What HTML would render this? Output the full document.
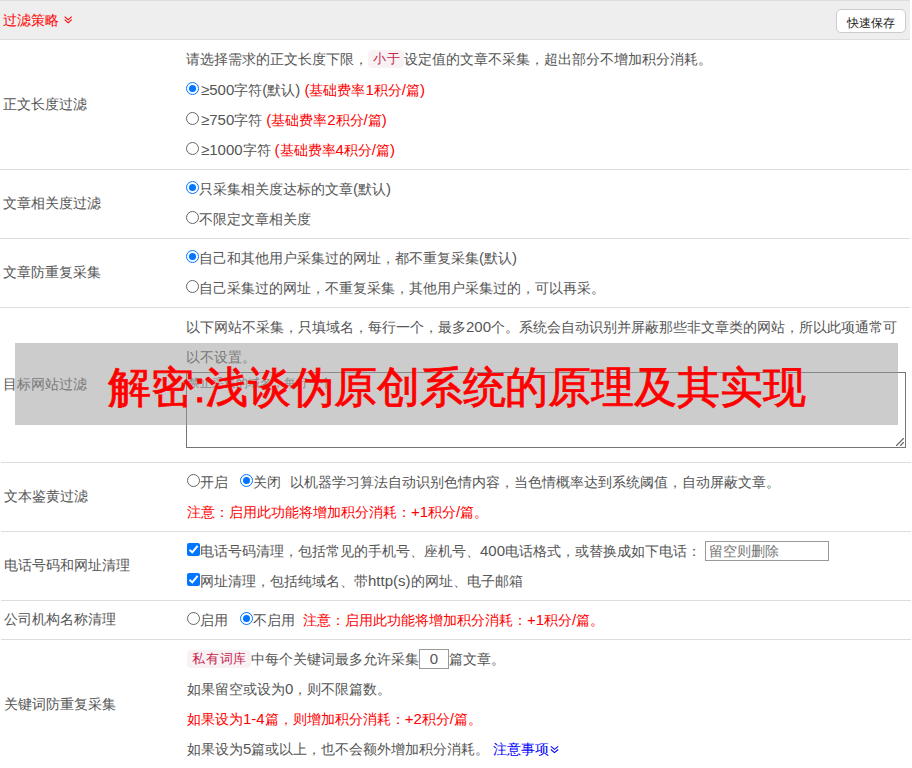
<!DOCTYPE html>
<html><head><meta charset="utf-8">
<style>
*{box-sizing:border-box;margin:0;padding:0}
html,body{width:912px;height:768px;overflow:hidden;background:#fff}
body{font-family:"Liberation Sans",sans-serif;font-size:14px;color:#555;position:relative}
.hdr{position:absolute;left:0;top:0;width:910px;height:40px;background:#eee;border-top:1px solid #ddd;border-bottom:1px solid #ddd}
.hdr .t{position:absolute;left:2.8px;top:0;line-height:39px;color:#f00}
.btn{position:absolute;left:836px;top:8px;width:70px;height:24px;border:1px solid #ccc;border-radius:5px;background:#fff;color:#222;font-size:12px;text-align:center;line-height:24px;padding-top:1px}
.row{position:absolute;left:0;width:910px;border-bottom:1px solid #ddd}
.lbl{position:absolute;left:3px;top:0;bottom:0;display:flex;align-items:center}
.c{position:absolute;left:186px;top:4px;right:0}
.ln{height:30px;line-height:30px;white-space:nowrap;position:relative}
.red{color:#f00}
.rd{display:inline-block;width:13px;height:13px;border-radius:50%;border:1px solid #666;vertical-align:top;margin-top:7px;position:relative}
.rd.on{border-color:#1a73e8;border:1px solid #0075ff}
.rd.on::after{content:"";position:absolute;left:2px;top:2px;width:7px;height:7px;border-radius:50%;background:#0075ff}
.cb{display:inline-block;width:13px;height:13px;border-radius:2px;background:#0075ff;vertical-align:top;margin-top:7px;position:relative}
.code{display:inline-block;height:18px;line-height:18px;vertical-align:top;margin-top:6px;background:#f9f2f4;color:#c7254e;border-radius:4px;padding:0 4px}
.ta{position:absolute;left:186px;top:372px;width:720px;height:76px;border:1px solid #767676;border-radius:0;background:#fff}
.ipt{display:inline-block;border:1px solid #999;vertical-align:top}
.ov{position:absolute;left:15px;top:343px;width:883px;height:82px;background:rgba(153,153,153,.5)}
.ovt{position:absolute;left:108px;top:346px;height:82px;line-height:82px;font-size:43px;letter-spacing:-0.15px;color:#f00;white-space:nowrap;-webkit-text-stroke:.8px #f00}
i{font-style:normal;font-size:15px;letter-spacing:0}
.sp{display:inline-block;height:1px}
</style></head><body>
<div class="hdr"><span class="t">过滤策略</span><svg style="position:absolute;left:64px;top:14px" width="9" height="9" viewBox="0 0 9 9"><path d="M0.7 1.6L4.2 4.8L7.7 1.6M0.7 4.6L4.2 7.8L7.7 4.6" fill="none" stroke="#f00" stroke-width="1.1"/></svg><div class="btn">快速保存</div></div>

<div class="row" style="top:40px;height:130px">
 <div class="lbl">正文长度过滤</div>
 <div class="c">
  <div class="ln" style="height:31px;line-height:31px">请选择需求的正文长度下限，<span class="code" style="width:36px;font-size:13px;letter-spacing:.8px;padding-left:5px">小于</span>设定值的文章不采集，超出部分不增加积分消耗。</div>
  <div class="ln"><span class="rd on"></span><i style="padding-left:2px">≥500</i>字符<i>(</i>默认<i>) </i><span class="red"><i>(</i>基础费率<i>1</i>积分<i>/</i>篇<i>)</i></span></div>
  <div class="ln"><span class="rd"></span><i style="padding-left:2px">≥750</i>字符 <span class="red"><i>(</i>基础费率<i>2</i>积分<i>/</i>篇<i>)</i></span></div>
  <div class="ln"><span class="rd"></span><i style="padding-left:2px">≥1000</i>字符 <span class="red"><i>(</i>基础费率<i>4</i>积分<i>/</i>篇<i>)</i></span></div>
 </div>
</div>

<div class="row" style="top:170px;height:69px">
 <div class="lbl">文章相关度过滤</div>
 <div class="c">
  <div class="ln"><span class="rd on"></span>只采集相关度达标的文章<i>(</i>默认<i>)</i></div>
  <div class="ln"><span class="rd"></span>不限定文章相关度</div>
 </div>
</div>

<div class="row" style="top:239px;height:69px">
 <div class="lbl">文章防重复采集</div>
 <div class="c">
  <div class="ln"><span class="rd on"></span>自己和其他用户采集过的网址，都不重复采集<i>(</i>默认<i>)</i></div>
  <div class="ln"><span class="rd"></span>自己采集过的网址，不重复采集，其他用户采集过的，可以再采。</div>
 </div>
</div>

<div class="row" style="top:308px;height:154px;border-bottom:none">
 <div class="lbl">目标网站过滤</div>
 <div class="c">
  <div class="ln">以下网站不采集，只填域名，每行一个，最多<i>200</i>个。系统会自动识别并屏蔽那些非文章类的网站，所以此项通常可</div>
  <div class="ln">以不设置。</div>
 </div>
</div>
<div class="ta"><span style="position:absolute;left:1px;top:1px;color:#757575;font-size:12px;line-height:18px">禁止采集的域名，每行一个</span><svg style="position:absolute;left:0;top:0" width="719" height="75"><path d="M709.5 72.5L716.5 65.5M713.5 72.5L716.5 69.5" stroke="#666" stroke-width="1.1" stroke-linecap="round" fill="none"/></svg></div>

<div class="row" style="top:462px;height:70px;left:1px;border-top:1px solid #ddd">
 <div class="lbl">文本鉴黄过滤</div>
 <div class="c">
  <div class="ln"><span class="rd"></span>开启<b class="sp" style="width:12px"></b><span class="rd on"></span>关闭<b class="sp" style="width:9px"></b>以机器学习算法自动识别色情内容，当色情概率达到系统阈值，自动屏蔽文章。</div>
  <div class="ln red">注意：启用此功能将增加积分消耗：<i>+1</i>积分<i>/</i>篇。</div>
 </div>
</div>

<div class="row" style="top:532px;height:69px;left:1px">
 <div class="lbl">电话号码和网址清理</div>
 <div class="c">
  <div class="ln"><span class="cb"><svg style="position:absolute;left:0;top:0" width="13" height="13"><path d="M2.5 6.8L5.3 9.4L10.6 2.8" stroke="#fff" stroke-width="2" fill="none"/></svg></span>电话号码清理，包括常见的手机号、座机号、<i>400</i>电话格式，或替换成如下电话：<span class="ipt" style="width:124px;height:20px;margin-top:5px;margin-left:4px;line-height:18px;color:#757575;padding-left:3px">留空则删除</span></div>
  <div class="ln"><span class="cb"><svg style="position:absolute;left:0;top:0" width="13" height="13"><path d="M2.5 6.8L5.3 9.4L10.6 2.8" stroke="#fff" stroke-width="2" fill="none"/></svg></span>网址清理，包括纯域名、带<i>http(s)</i>的网址、电子邮箱</div>
 </div>
</div>

<div class="row" style="top:601px;height:39px;left:1px">
 <div class="lbl">公司机构名称清理</div>
 <div class="c">
  <div class="ln"><span class="rd"></span>启用<b class="sp" style="width:12px"></b><span class="rd on"></span>不启用<b class="sp" style="width:8px"></b><span class="red">注意：启用此功能将增加积分消耗：<i>+1</i>积分<i>/</i>篇。</span></div>
 </div>
</div>

<div class="row" style="top:640px;height:130px;border-bottom:none;left:1px">
 <div class="lbl">关键词防重复采集</div>
 <div class="c">
  <div class="ln"><span class="code" style="width:64px;font-size:13px;letter-spacing:.8px;padding-left:5px">私有词库</span>中每个关键词最多允许采集<span class="ipt" style="width:30px;height:20px;margin-top:5px;line-height:18px;text-align:center"><i>0</i></span>篇文章。</div>
  <div class="ln">如果留空或设为<i>0</i>，则不限篇数。</div>
  <div class="ln red">如果设为<i>1-4</i>篇，则增加积分消耗：<i>+2</i>积分<i>/</i>篇。</div>
  <div class="ln">如果设为<i>5</i>篇或以上，也不会额外增加积分消耗。 <span style="color:#00f">注意事项</span><svg style="vertical-align:top;margin-top:11px;margin-left:1px" width="9" height="9" viewBox="0 0 9 9"><path d="M0.8 1.3L4.5 4.4L8.2 1.3M0.8 4.5L4.5 7.6L8.2 4.5" fill="none" stroke="#00f" stroke-width="1.1"/></svg></div>
 </div>
</div>

<div class="ov"></div>
<div class="ovt">解密:浅谈伪原创系统的原理及其实现</div>
</body></html>
